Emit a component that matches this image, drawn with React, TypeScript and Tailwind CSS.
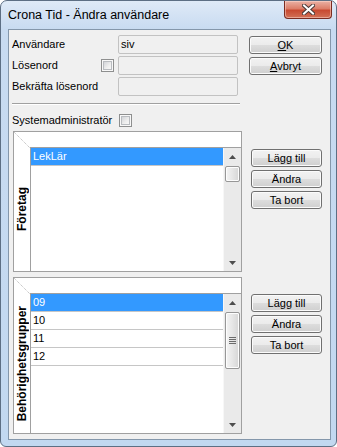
import type { ReactNode } from 'react';

const SANS = "font-['Liberation_Sans',Arial,sans-serif]";

function Checkbox() {
  return (
    <span className="block w-[13px] h-[13px] border border-[#8e8f8f] bg-[#f8f8f8] p-[1px]">
      <span className="block w-full h-full border border-[#b9bcc0] bg-[linear-gradient(135deg,#d2d4d8,#eeeeee_60%,#f7f7f7)]" />
    </span>
  );
}

function Btn({ children }: { children: ReactNode }) {
  return (
    <div className="h-[18px] w-full rounded-[3px] border border-[#707070] bg-[linear-gradient(to_bottom,#f2f2f2_0%,#ebebeb_49%,#dddddd_50%,#cfcfcf_100%)] shadow-[inset_0_0_0_1px_#fbfbfb] flex items-center justify-center text-[11px] leading-none text-black">
      {children}
    </div>
  );
}

function TextBox({ value }: { value?: string }) {
  return (
    <div className="w-[120px] h-[19px] rounded-[2px] border border-[#c2c2c2] bg-[#f0f0f0] flex items-center pl-[2px] text-[11px] text-black">
      {value}
    </div>
  );
}

function Arrow({ up }: { up?: boolean }) {
  return (
    <svg width="7" height="4" viewBox="0 0 7 4">
      <path d={up ? 'M3.5 0 L7 4 H0 Z' : 'M0 0 H7 L3.5 4 Z'} fill="#4d4d4d" />
    </svg>
  );
}

interface GridProps {
  label: string;
  rows: string[];
  height: string;
  thumb: string;
  grip?: boolean;
}

function Grid({ label, rows, height, thumb, grip }: GridProps) {
  return (
    <div className={`w-[229px] ${height} border border-[#a0a0a0] bg-white flex flex-col`}>
      {/* header */}
      <div className="flex h-[16px] shrink-0">
        <svg width="16" height="16" className="shrink-0">
          <line x1="0" y1="0" x2="16" y2="16" stroke="#b5b5b5" strokeWidth="1" strokeDasharray="1 1" />
        </svg>
        <div className="flex-1 border-b border-[#a0a0a0]" />
      </div>
      {/* body */}
      <div className="flex flex-1 min-h-0">
        <div className="w-[17px] shrink-0 border-r border-[#a0a0a0] flex items-center justify-center">
          <span className="[writing-mode:vertical-rl] rotate-180 font-bold text-[12px] leading-none text-black">
            {label}
          </span>
        </div>
        <div className="flex-1 flex flex-col">
          {rows.map((r, i) => (
            <div
              key={r}
              className={`h-[18px] border-b border-[#c6c6c6] pl-[2px] text-[11px] leading-[17px] ${
                i === 0 ? 'bg-[#3399ff] text-white' : 'text-black'
              }`}
            >
              {r}
            </div>
          ))}
        </div>
        {/* scrollbar */}
        <div className="w-[18px] shrink-0 bg-[#eaeaea] border-l border-[#f7f7f7] flex flex-col">
          <div className="h-[17px] flex items-center justify-center">
            <Arrow up />
          </div>
          <div
            className={`mt-[1px] mx-[1px] ${thumb} rounded-[2px] border border-[#979797] bg-[linear-gradient(to_right,#f4f4f4,#e6e6e6_50%,#d6d6d6)] shadow-[inset_0_0_0_1px_#fdfdfd] flex flex-col items-center justify-center gap-[1px]`}
          >
            {grip && (
              <>
                <span className="block w-[7px] h-px bg-[#6b6b6b]" />
                <span className="block w-[7px] h-px bg-[#6b6b6b]" />
                <span className="block w-[7px] h-px bg-[#6b6b6b]" />
                <span className="block w-[7px] h-px bg-[#6b6b6b]" />
              </>
            )}
          </div>
          <div className="flex-1" />
          <div className="h-[17px] flex items-center justify-center">
            <Arrow />
          </div>
        </div>
      </div>
    </div>
  );
}

export default function App() {
  return (
    <div className={`w-[337px] h-[447px] ${SANS} text-black`}>
      <div className="w-full h-full rounded-t-[7px] rounded-b-[6px] border border-[#5d6f84] bg-[linear-gradient(to_bottom,#dfeaf7,#c8dbf1_28px,#c2d8f0)] flex flex-col">
        {/* title bar */}
        <div className="h-[28px] shrink-0 flex items-start">
          <span className="ml-[7px] mt-[7px] text-[12.5px] leading-[15px] text-black">Crona Tid - Ändra användare</span>
          <div className="ml-auto mr-[4px] w-[48px] h-[18px] rounded-b-[4px] border border-t-0 border-[#7a2c22] bg-[linear-gradient(to_bottom,#eab2a5_0%,#dc7e69_45%,#c84a31_55%,#d27157_100%)] shadow-[inset_0_0_0_1px_rgba(255,220,210,0.5)] flex items-center justify-center">
            <svg width="13" height="11" viewBox="0 0 13 11">
              <path d="M2 1.5 L11 9.5 M11 1.5 L2 9.5" stroke="#4a3a38" strokeWidth="4" strokeLinecap="square" />
              <path d="M2 1.5 L11 9.5 M11 1.5 L2 9.5" stroke="#ffffff" strokeWidth="2" strokeLinecap="square" />
            </svg>
          </div>
        </div>

        {/* client area */}
        <div className="ml-[7px] w-[323px] h-[411px] border border-[#8497ab] bg-[#f0f0f0] flex flex-col">
          {/* user fields */}
          <div className="flex">
            <div className="w-[240px] pl-[3px] pt-[5px] flex flex-col gap-[2px] text-[11px]">
              <div className="flex items-center h-[19px]">
                <span className="w-[106px]">Användare</span>
                <TextBox value="siv" />
              </div>
              <div className="flex items-center h-[19px]">
                <span className="w-[89px]">Lösenord</span>
                <span className="w-[17px]">
                  <Checkbox />
                </span>
                <TextBox />
              </div>
              <div className="flex items-center h-[19px]">
                <span className="w-[106px]">Bekräfta lösenord</span>
                <TextBox />
              </div>
            </div>
            <div className="w-[73px] pt-[6px] flex flex-col gap-[3px]">
              <Btn>
                <span className="underline underline-offset-1">O</span>K
              </Btn>
              <Btn>
                <span className="underline underline-offset-1">A</span>vbryt
              </Btn>
            </div>
          </div>

          {/* separator */}
          <div className="ml-[3px] mt-[7px] w-[228px] border-t border-[#a0a0a0] border-b border-b-white" />

          <div className="ml-[3px] mt-[9px] h-[13px] flex items-center text-[11px]">
            <span className="w-[107px]">Systemadministratör</span>
            <Checkbox />
          </div>

          {/* Företag */}
          <div className="mt-[4px] ml-[4px] flex">
            <Grid label="Företag" rows={['LekLär']} height="h-[141px]" thumb="h-[16px]" />
            <div className="ml-[9px] w-[71px] pt-[18px] flex flex-col gap-[3px]">
              <Btn>Lägg till</Btn>
              <Btn>Ändra</Btn>
              <Btn>Ta bort</Btn>
            </div>
          </div>

          {/* Behörighetsgrupper */}
          <div className="mt-[5px] ml-[4px] flex">
            <Grid
              label="Behörighetsgrupper"
              rows={['09', '10', '11', '12']}
              height="h-[157px]"
              thumb="h-[57px]"
              grip
            />
            <div className="ml-[9px] w-[71px] pt-[17px] flex flex-col gap-[3px]">
              <Btn>Lägg till</Btn>
              <Btn>Ändra</Btn>
              <Btn>Ta bort</Btn>
            </div>
          </div>
        </div>
      </div>
    </div>
  );
}
